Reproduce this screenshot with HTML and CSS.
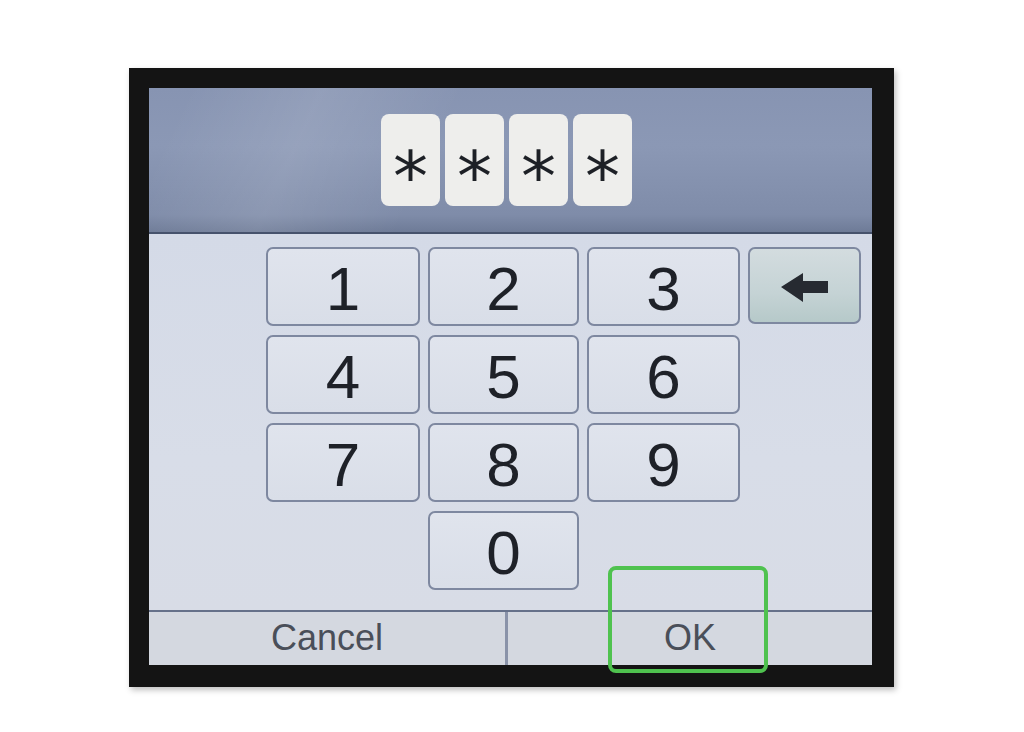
FILE: index.html
```html
<!DOCTYPE html>
<html>
<head>
<meta charset="utf-8">
<link rel="stylesheet" href="styles.css">
</head>
<body>
<div class="page">
  <div class="frame">
    <div class="screen">
      <div class="header">
        <div class="pin">
          <div class="pin-box"><span class="mask">*</span></div>
          <div class="pin-box"><span class="mask">*</span></div>
          <div class="pin-box"><span class="mask">*</span></div>
          <div class="pin-box"><span class="mask">*</span></div>
        </div>
      </div>
      <div class="keypad">
        <div class="key">1</div>
        <div class="key">2</div>
        <div class="key">3</div>
        <div class="key back">
          <svg width="50" height="32" viewBox="0 0 50 32"><path d="M1 15 L23 1 L23 9 L48 9 L48 21 L23 21 L23 30 Z" fill="#262a31"/></svg>
        </div>
        <div class="key">4</div>
        <div class="key">5</div>
        <div class="key">6</div>
        <div class="empty"></div>
        <div class="key">7</div>
        <div class="key">8</div>
        <div class="key">9</div>
        <div class="empty"></div>
        <div class="empty"></div>
        <div class="key">0</div>
      </div>
      <div class="bottom">
        <div class="action cancel">Cancel</div>
        <div class="action ok">OK</div>
      </div>
    </div>
  </div>
  <div class="highlight"></div>
</div>
</body>
</html>
```
FILE: styles.css
```css
html, body {
  margin: 0;
  padding: 0;
  background: #ffffff;
}
.page {
  position: relative;
  width: 1024px;
  height: 732px;
  padding: 68px 0 0 129px;
  box-sizing: border-box;
}
.frame {
  width: 765px;
  height: 619px;
  background: #141414;
  box-sizing: border-box;
  padding: 20px 22px 22px 20px;
  box-shadow: 2px 3px 6px rgba(0,0,0,0.25);
}
.screen {
  width: 723px;
  height: 577px;
  display: flex;
  flex-direction: column;
  font-family: "Liberation Sans", Arial, sans-serif;
  overflow: hidden;
}
.header {
  height: 146px;
  flex: none;
  border-bottom: 2px solid #46526c;
  background:
    linear-gradient(115deg, rgba(255,255,255,0) 5%, rgba(255,255,255,0.10) 22%, rgba(255,255,255,0) 40%),
    linear-gradient(180deg, #8794b2 0%, #8b98b5 40%, #7f8ca9 88%, #6e7b97 100%);
  padding: 26px 0 0 232px;
  box-sizing: border-box;
}
.pin {
  display: flex;
  gap: 5px;
}
.pin-box {
  width: 59px;
  height: 92px;
  background: #eeeeec;
  border-radius: 8px;
  display: flex;
  justify-content: center;
  align-items: flex-start;
}
.mask {
  font-family: "DejaVu Sans", sans-serif;
  font-size: 70px;
  line-height: 1;
  color: #1d2026;
  padding-top: 28px;
}
.keypad {
  flex: 1;
  background: linear-gradient(180deg, #d4dae7 0%, #d8dde8 60%, #d8dce6 100%);
  display: grid;
  grid-template-columns: 154px 151px 153px 113px;
  grid-auto-rows: 79px;
  column-gap: 8px;
  row-gap: 9px;
  padding: 13px 0 0 117px;
  box-sizing: border-box;
  align-content: start;
}
.key {
  border: 2px solid #7e88a0;
  border-radius: 7px;
  background: linear-gradient(180deg, #e0e4ed 0%, #d9dee8 100%);
  box-sizing: border-box;
  display: flex;
  justify-content: center;
  align-items: center;
  font-size: 62px;
  color: #1e2128;
  padding-top: 4px;
}
.key.back {
  height: 77px;
  background: linear-gradient(180deg, #d3dcdf 0%, #c5d3d5 60%, #b6c9c9 100%);
  padding: 4px 0 0 0;
}
.bottom {
  height: 55px;
  flex: none;
  border-top: 2px solid #66718a;
  background: #d4d8e0;
  display: flex;
  box-sizing: border-box;
}
.action {
  display: flex;
  justify-content: center;
  align-items: center;
  font-size: 36px;
  color: #4a4f59;
  padding-bottom: 2px;
}
.cancel {
  width: 356px;
  border-right: 3px solid #8a93a9;
}
.ok {
  flex: 1;
}
.highlight {
  position: absolute;
  left: 608px;
  top: 566px;
  width: 160px;
  height: 107px;
  border: 4px solid #4fc24f;
  border-radius: 8px;
  box-sizing: border-box;
}
```
